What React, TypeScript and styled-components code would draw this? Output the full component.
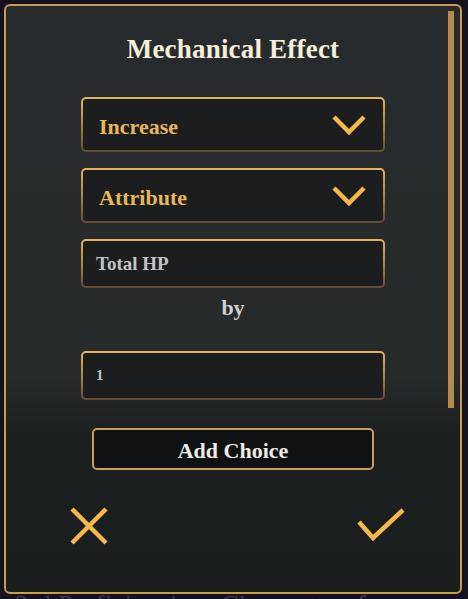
import React from "react";
import styled, { createGlobalStyle } from "styled-components";

const Global = createGlobalStyle`
  html, body { margin: 0; padding: 0; }
  body {
    background: #14131d;
    font-family: "Liberation Serif", "DejaVu Serif", serif;
    overflow: hidden;
  }
`;

const Page = styled.div`
  position: relative;
  width: 468px;
  height: 599px;
  overflow: hidden;
`;

const BackdropLine = styled.div`
  padding: 590px 0 0 15px;
  font-size: 26px;
  line-height: 30px;
  color: #3b3c4e;
  white-space: nowrap;
  letter-spacing: 0.5px;
`;

const Dialog = styled.div`
  position: absolute;
  top: 4px;
  left: 4px;
  width: 458px;
  height: 590px;
  box-sizing: border-box;
  border: 2px solid #c99b4e;
  border-radius: 6px;
  background: linear-gradient(
    to bottom,
    #282b2d 0px,
    #272a2b 370px,
    #1d2021 430px,
    #1b1e1f 100%
  );
  display: flex;
  flex-direction: column;
  align-items: center;
`;

const ScrollThumb = styled.div`
  position: absolute;
  top: 5px;
  right: 6px;
  width: 6px;
  height: 397px;
  background: #b58c4c;
`;

const Title = styled.h1`
  margin: 27px 0 0;
  font-size: 27px;
  font-weight: 700;
  color: #f5eed9;
  line-height: 32px;
  letter-spacing: 0.2px;
`;

const Fields = styled.div`
  margin-top: 32px;
  width: 304px;
  display: flex;
  flex-direction: column;
  gap: 16px;
`;

const frame = `
  box-sizing: border-box;
  border: 2px solid transparent;
  border-radius: 5px;
  background:
    linear-gradient(#1b1d1e, #1b1d1e) padding-box,
    linear-gradient(to bottom, #e4b459 0%, #a8853f 55%, #5e4c33 100%) border-box;
  display: flex;
  align-items: center;
`;

const Select = styled.div`
  ${frame}
  height: 55px;
  padding: 0 16px 0 16px;
  justify-content: space-between;
`;

const SelectLabel = styled.span`
  font-size: 22px;
  font-weight: 700;
  color: #e8b65b;
  padding-top: 4px;
`;

const Input = styled.div<{ $size: number }>`
  ${frame}
  height: 49px;
  padding: 0 13px;
  font-size: ${(p) => p.$size}px;
  font-weight: 700;
  color: #c3c3c3;
`;

const ByLabel = styled.div`
  text-align: center;
  font-size: 22px;
  font-weight: 700;
  color: #cfcfcf;
  margin: -9px 0 14px;
  line-height: 26px;
`;

const AddButton = styled.button`
  margin-top: 28px;
  width: 282px;
  height: 42px;
  box-sizing: border-box;
  border: 2px solid #c9a053;
  border-radius: 5px;
  background: #0f1113;
  color: #eeebe3;
  font-family: "Liberation Serif", "DejaVu Serif", serif;
  font-size: 22px;
  font-weight: 700;
  padding: 3px 0 0;
  cursor: pointer;
`;

const Actions = styled.div`
  margin-top: 36px;
  width: 100%;
  box-sizing: border-box;
  padding: 0 54px 0 58px;
  display: flex;
  justify-content: space-between;
  align-items: center;
`;

const IconButton = styled.button`
  background: none;
  border: none;
  padding: 0;
  width: 50px;
  height: 40px;
  display: flex;
  align-items: center;
  justify-content: center;
  cursor: pointer;
`;

const Chevron = () => (
  <svg width="36" height="22" viewBox="0 0 36 22">
    <path
      d="M3 3 L18 18 L33 3"
      fill="none"
      stroke="#f4b84b"
      strokeWidth="4.5"
      strokeLinecap="butt"
      strokeLinejoin="miter"
    />
  </svg>
);

const CloseIcon = () => (
  <svg width="40" height="38" viewBox="0 0 40 38">
    <path
      d="M3 2 L37 36 M37 2 L3 36"
      fill="none"
      stroke="#f5b94b"
      strokeWidth="4.5"
    />
  </svg>
);

const CheckIcon = () => (
  <svg width="50" height="38" viewBox="0 0 50 38">
    <path
      d="M3 15 L17 31 L47 3"
      fill="none"
      stroke="#f5b94b"
      strokeWidth="4.5"
      strokeLinejoin="miter"
    />
  </svg>
);

export default function App() {
  return (
    <>
      <Global />
      <Page>
        <BackdropLine>3rd Proficiencies . Choose two from among</BackdropLine>
        <Dialog>
          <ScrollThumb />
          <Title>Mechanical Effect</Title>
          <Fields>
            <Select>
              <SelectLabel>Increase</SelectLabel>
              <Chevron />
            </Select>
            <Select>
              <SelectLabel>Attribute</SelectLabel>
              <Chevron />
            </Select>
            <Input $size={19}>Total HP</Input>
            <ByLabel>by</ByLabel>
            <Input $size={15}>1</Input>
          </Fields>
          <AddButton>Add Choice</AddButton>
          <Actions>
            <IconButton aria-label="Cancel">
              <CloseIcon />
            </IconButton>
            <IconButton aria-label="Confirm">
              <CheckIcon />
            </IconButton>
          </Actions>
        </Dialog>
      </Page>
    </>
  );
}
